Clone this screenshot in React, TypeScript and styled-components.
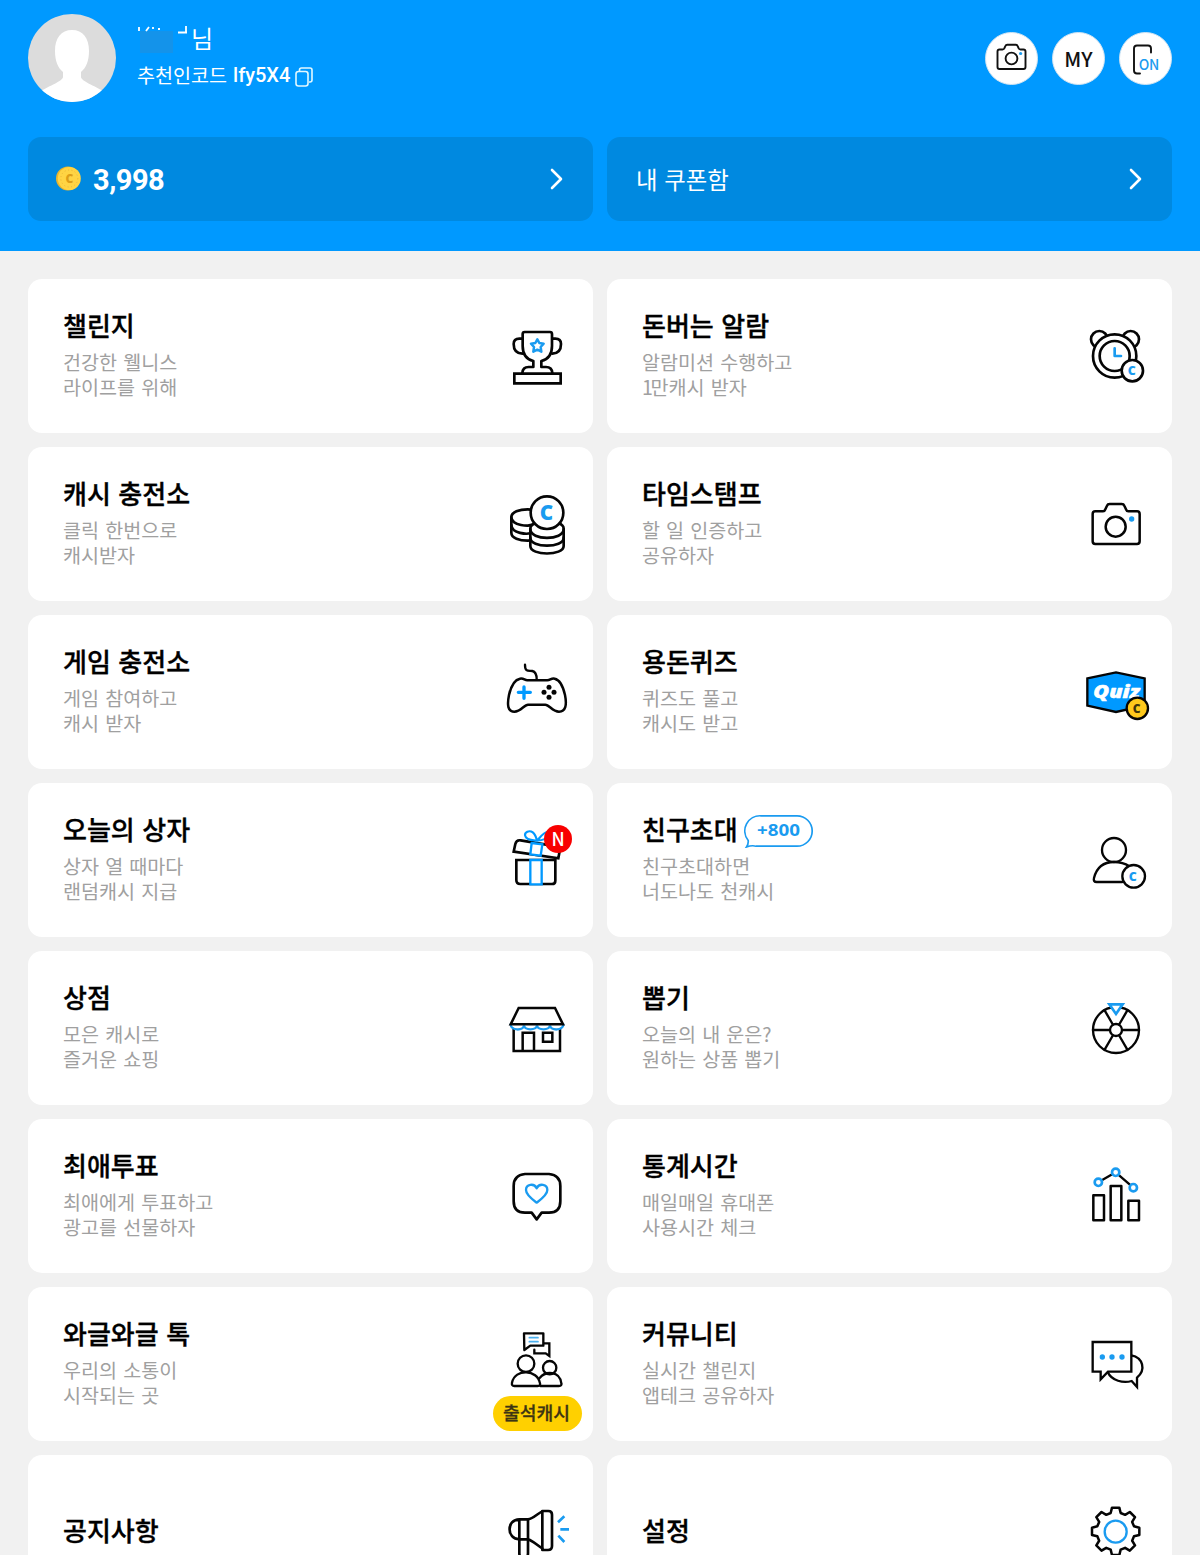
import React from "react";
import styled, { createGlobalStyle } from "styled-components";

const BLUE = "#1a9bf0";
const SKY = "#0099ff";
const INK = "#050505";

const Global = createGlobalStyle`
  * { box-sizing: border-box; }
  body {
    margin: 0;
    background: #f1f1f1;
    font-family: "Noto Sans CJK KR", "Noto Sans", sans-serif;
  }
`;

const Page = styled.div`
  width: 1200px;
  height: 1555px;
  overflow: hidden;
  background: #f1f1f1;
`;

const Header = styled.header`
  height: 251px;
  padding: 14px 28px 0;
  background: ${SKY};
  color: #fff;
`;

const Profile = styled.div`
  display: flex;
  height: 88px;
`;

const AvatarArt = styled.svg`
  width: 88px;
  height: 88px;
  flex: none;
`;

const Identity = styled.div`
  flex: 1;
  padding: 7px 0 0 21px;
`;

const NameRow = styled.div`
  display: flex;
  height: 34px;
  align-items: center;
  font-size: 24px;
  font-weight: 400;
  line-height: 34px;
`;

const Mask = styled.svg`
  width: 54px;
  height: 34px;
  flex: none;
  position: relative;
  top: 1px;
`;

const CodeRow = styled.div`
  display: flex;
  align-items: center;
  height: 28px;
  margin-top: 6px;
  font-size: 19.6px;
  font-weight: 400;
  line-height: 28px;
  white-space: pre;
  word-spacing: 1.5px;
`;

const Code = styled.span`
  font-family: Roboto, sans-serif;
  font-size: 20px;
  font-weight: 500;
`;

const CopyArt = styled.svg`
  width: 18px;
  height: 20px;
  margin: 4px 0 0 5px;
`;

const Actions = styled.div`
  display: flex;
  gap: 14px;
  align-items: center;
`;

const RoundButton = styled.button`
  display: flex;
  width: 53px;
  height: 53px;
  padding: 0;
  align-items: center;
  justify-content: center;
  border: 1px solid #cfe3f2;
  border-radius: 50%;
  background: #fff;
  color: #111;
  font: 500 20.5px/1 "Noto Sans CJK KR", sans-serif;
`;

const RoundArt = styled.svg`
  width: 51px;
  height: 51px;
`;

const Wallet = styled.div`
  display: grid;
  grid-template-columns: 1fr 1fr;
  gap: 14px;
  margin-top: 35px;
`;

const WalletItem = styled.div`
  display: flex;
  height: 84px;
  align-items: center;
  padding: 0 29px 0 28px;
  border-radius: 13px;
  background: #0089e0;
`;

const CoinArt = styled.svg`
  width: 25px;
  height: 25px;
  margin: 0 12px 2px 0;
`;

const Amount = styled.span`
  flex: 1;
  padding-top: 2px;
  font: 700 29px/34px Roboto, sans-serif;
  letter-spacing: -0.5px;
`;

const WalletLabel = styled.span`
  flex: 1;
  padding-left: 1px;
  font-size: 23.4px;
  font-weight: 400;
  line-height: 34px;
  padding-bottom: 1px;
  word-spacing: 1.5px;
`;

const ChevronArt = styled.svg`
  width: 14px;
  height: 24px;
`;

const Grid = styled.main`
  display: grid;
  grid-template-columns: 1fr 1fr;
  gap: 14px;
  padding: 28px 28px 0;
`;

const Card = styled.section`
  position: relative;
  display: flex;
  height: 154px;
  align-items: center;
  padding: 0 14px 0 35px;
  border-radius: 14px;
  background: #fff;
`;

const CardText = styled.div`
  flex: 1;
  padding-bottom: 5px;
`;

const TitleRow = styled.div`
  display: flex;
  height: 34px;
  align-items: center;
`;

const Title = styled.h2`
  margin: 0;
  color: #000;
  font-size: 26px;
  font-weight: 500;
  line-height: 34px;
  word-spacing: 1.6px;
  -webkit-text-stroke: 0.35px #000;
`;

const Caption = styled.p`
  margin: 7px 0 0;
  color: #a0a0a0;
  font-size: 19.6px;
  font-weight: 400;
  line-height: 25px;
  white-space: pre-line;
  word-spacing: 1.7px;
`;

const Tight = styled.span`
  letter-spacing: -2.4px;
`;

const IconSlot = styled.div`
  position: relative;
  width: 84px;
  height: 84px;
`;

const IconArt = styled.svg`
  display: block;
  width: 84px;
  height: 84px;
  overflow: visible;
`;

const NewBadge = styled.span`
  position: absolute;
  top: 7px;
  left: 49px;
  width: 28px;
  height: 28px;
  border-radius: 50%;
  background: #f80000;
  color: #fff;
  font: 500 18px/27px "Noto Sans CJK KR", sans-serif;
  text-align: center;
`;

const CashBadge = styled.span`
  position: absolute;
  right: 11px;
  bottom: 10px;
  width: 89px;
  height: 35px;
  padding-right: 2px;
  border-radius: 18px;
  background: #ffd000;
  color: #3d3413;
  font-size: 18.2px;
  font-weight: 500;
  line-height: 33px;
  text-align: center;
  -webkit-text-stroke: 0.3px #3d3413;
`;

const Bubble = styled.svg`
  width: 70px;
  height: 34px;
  margin: 4px 0 0 6px;
`;

type IconProps = { box: string; children: React.ReactNode };

const Icon = ({ box, children }: IconProps) => (
  <IconArt
    viewBox={box}
    fill="none"
    stroke={INK}
    strokeWidth={8}
    strokeLinecap="round"
    strokeLinejoin="round"
  >
    {children}
  </IconArt>
);

const Letter = ({
  x,
  y,
  size,
  fill = BLUE,
  children,
}: {
  x: number;
  y: number;
  size: number;
  fill?: string;
  children: string;
}) => (
  <text
    x={x}
    y={y}
    fontSize={size}
    fontWeight={800}
    fontFamily="Open Sans, sans-serif"
    textAnchor="middle"
    fill={fill}
    stroke="none"
  >
    {children}
  </text>
);

const Trophy = () => (
  <Icon box="15 12 252 252">
    <path d="M97 86H88Q71 86 71 102Q71 130 97 131M187 86h9q17 0 17 16q0 28-26 29" />
    <path d="M130 153C110 148 98 132 98 108V72q0-6 6-6h76q6 0 6 6v36c0 24-12 40-32 45v18h14q18 0 19 18M130 153v18h-14q-18 0-19 18" />
    <path d="M73 191H212V220H73Z" strokeLinejoin="miter" />
    <path
      d="M142 88l6 11 13 2-9 10 2 14-12-6-12 6 2-14-9-10 13-2Z"
      stroke={BLUE}
      strokeWidth={7.5}
    />
  </Icon>
);

const Coins = () => (
  <Icon box="15 516 252 252">
    <path d="M64 622c0-32 98-32 98 0v46c0 32-98 32-98 0Z" fill="#fff" />
    <path d="M64 622c2 27 55 27 62 22M64 645c2 27 48 28 58 24" />
    <path d="M121 656c0-30 100-30 100 0v52c0 30-100 30-100 0Z" fill="#fff" />
    <path d="M121 658c0 34 100 34 100 0M121 683c0 32 100 32 100 0" />
    <circle cx="171" cy="608" r="49" fill="#fff" />
    <Letter x={169} y={631} size={62}>C</Letter>
  </Icon>
);

const Alarm = () => (
  <Icon box="12 12 252 252">
    <circle cx="88" cy="88" r="25" />
    <circle cx="182" cy="88" r="25" />
    <circle cx="134" cy="138" r="65" fill="#fff" />
    <circle cx="134" cy="138" r="45" />
    <path d="M134 115v23h19" stroke={BLUE} />
    <circle cx="187" cy="182" r="32" fill="#fff" />
    <Letter x={185} y={195} size={37}>C</Letter>
  </Icon>
);

const Camera = () => (
  <Icon box="12 516 252 252">
    <path d="M76 604h23q5 0 7-6l5-11q2-5 8-5h36q6 0 8 5l5 11q2 6 7 6h26q8 0 8 8v82q0 8-8 8H76q-8 0-8-8v-82q0-8 8-8Z" strokeWidth={7.5} />
    <circle cx="137" cy="650" r="30" strokeWidth={7.5} />
    <circle cx="185" cy="627" r="8" fill={BLUE} stroke="none" />
  </Icon>
);

const Gamepad = () => (
  <Icon box="15 0 252 252">
    <path d="M105 44c0 24 12 17 22 19q13 3 13 25" strokeWidth={7} />
    <path d="M112 91h60c9 0 11-7 22-5c16 3 25 22 31 49c6 30 2 50-18 50c-20 0-29-21-41-21h-52c-12 0-21 21-41 21c-20 0-22-20-16-50c6-27 17-46 33-49c12-2 13 5 22 5Z" strokeWidth={7.5} />
    <path d="M102 111v34M85 127h36" stroke={SKY} strokeWidth={10} />
    <g fill={INK} stroke="none">
      <circle cx="177" cy="112" r="7.500" />
      <circle cx="177" cy="142" r="7.500" />
      <circle cx="162" cy="127" r="7.500" />
      <circle cx="192" cy="127" r="7.500" />
    </g>
  </Icon>
);

const Quiz = () => (
  <Icon box="12 0 252 252">
    <path d="M52 85L138 67l86 18v82l-86 19-86-19Z" fill={SKY} strokeLinejoin="miter" strokeWidth={7} />
    <text
      x="140"
      y="144"
      fontSize="52"
      fontWeight="800"
      fontStyle="italic"
      fontFamily="Open Sans, sans-serif"
      textAnchor="middle"
      textLength="140"
      lengthAdjust="spacingAndGlyphs"
      fill="#fff"
      stroke="#fff"
      strokeWidth="1.5"
    >
      Quiz
    </text>
    <circle cx="202" cy="175" r="32" fill="#ffc91c" strokeWidth={7} />
    <Letter x={200} y={188} size={36} fill="#40350b">C</Letter>
  </Icon>
);

const Gift = () => (
  <Icon box="15 504 252 252">
    <g strokeLinejoin="miter">
      <path d="M79 630H196V692q0 10-10 10H91q-12 0-12-12Z" />
      <path d="M71 605l5-23q3-13 16-11l108 18q11 3 9 14l-4 22Z" fill="#fff" />
      <path d="M121 630h34v73h-34ZM125 579l32 4-5 34-31-4Z" stroke={SKY} strokeWidth={7} fill="#fff" />
    </g>
    <path
      d="M141 572c-6-26-18-31-29-27c-11 5-8 17 2 22c8 4 18 4 27 5c8-8 22-28 31-26c15 4 9 22-31 26"
      stroke={SKY}
      strokeWidth={6.5}
    />
  </Icon>
);

const Friend = () => (
  <Icon box="12 504 252 252">
    <circle cx="132" cy="600" r="36" strokeWidth={7} />
    <path d="M157 696H80q-11 0-8-12C80 652 102 636 132 636q27 0 46 13" strokeWidth={7} />
    <circle cx="191" cy="679" r="34" fill="#fff" strokeWidth={7} />
    <Letter x={188} y={692} size={37}>C</Letter>
  </Icon>
);

const Store = () => (
  <Icon box="15 -12 252 252">
    <g strokeLinejoin="miter" strokeWidth={7.5}>
      <path d="M71 115V183H210V115M98 183V128H132V183M159 128H187V155H159Z" />
      <path
        d="M62 103c0 20 39 20 40 3c1 16 38 16 39 0c1 16 38 16 39 0c1 17 40 17 40-3"
        stroke={BLUE}
        strokeWidth={7}
        fill="#fff"
      />
      <path d="M86 54H195L219 103H62Z" />
    </g>
  </Icon>
);

const Wheel = () => (
  <Icon box="12 -12 252 252">
    <circle cx="138" cy="120" r="69" strokeWidth={7} />
    {[0, 60, 120, 180, 240, 300].map((angle) => (
      <path key={angle} d="M157 120H207" strokeWidth={7} transform={`rotate(${angle} 138 120)`} />
    ))}
    <circle cx="138" cy="120" r="18" strokeWidth={7} />
    <path d="M118 43H158L138 72Z" fill="#fff" stroke={BLUE} strokeLinejoin="miter" />
  </Icon>
);

const Vote = () => (
  <Icon box="15 492 252 252">
    <path d="M105 552h72q34 3 34 36v46q0 34-34 34h-22l-15 20-15-20h-20q-34 0-34-34v-46q0-33 34-36Z" />
    <path
      d="M140 638c-9-7-32-23-32-38c0-17 24-22 32-5c8-17 32-12 32 5c0 15-23 31-32 38Z"
      stroke={BLUE}
      strokeWidth={7}
    />
  </Icon>
);

const Stats = () => (
  <Icon box="12 492 252 252">
    <path d="M70 616H102V691H70ZM122 588H154V691H122ZM175 632H207V691H175Z" strokeWidth={7.5} />
    <path d="M85 577L137 547L190 593" strokeWidth={7} />
    <g fill="#fff" stroke={BLUE}>
      <circle cx="85" cy="577" r="11" />
      <circle cx="137" cy="547" r="11" />
      <circle cx="190" cy="593" r="11" />
    </g>
  </Icon>
);

const Talk = () => (
  <Icon box="45 36 252 252">
    <g strokeWidth={7}>
      <path d="M192 100h16v38l-11-8h-34v-11" strokeLinejoin="miter" />
      <path d="M132 70h58v37h-39l-18 13Z" fill="#fff" />
      <path d="M148 83h26M148 95h26" stroke="#4bb0ef" strokeWidth={5} />
      <circle cx="209" cy="173" r="20" />
      <path d="M181 228h56q9 0 7-8c-5-38-47-38-65-16" />
      <circle cx="138" cy="161" r="25" />
      <path d="M103 228h70q9 0 7-8c-7-42-75-46-84-2q-2 10 7 10Z" fill="#fff" />
    </g>
  </Icon>
);

const Community = () => (
  <Icon box="12 36 252 252">
    <path d="M184 136c35 7 45 43 17 67v28l-16-18c-25 7-60 0-72-27" strokeWidth={7} strokeLinejoin="miter" />
    <path d="M68 96H184V185H114L92 208V185H68Z" strokeLinejoin="miter" strokeWidth={7} fill="#fff" />
    <g fill={BLUE} stroke="none">
      <circle cx="97" cy="141" r="8" />
      <circle cx="126" cy="141" r="8" />
      <circle cx="156" cy="141" r="8" />
    </g>
  </Icon>
);

const Megaphone = () => (
  <Icon box="45 540 252 252">
    <path d="M118 628c-39 0-39 60 0 60M118 628h26v60h-26ZM144 628c14-1 28-17 43-24M144 688c14 3 28 19 43 27" />
    <path d="M187 603h18q11 0 11 11v94q0 12-12 12h-17ZM118 688v42q0 14 13 14t13-14v-42" />
    <path d="M234 637l19-18M241 658h26M235 677l18 19" stroke={BLUE} strokeLinecap="butt" />
  </Icon>
);

const gearOutline = () => {
  const points: string[] = [];
  for (let tooth = 0; tooth < 8; tooth += 1) {
    const turn = (tooth * Math.PI) / 4;
    [
      [-15, 55],
      [-11, 71],
      [11, 71],
      [15, 55],
    ].forEach(([side, out]) => {
      const x = 137 + out * Math.sin(turn) + side * Math.cos(turn);
      const y = 664 - out * Math.cos(turn) + side * Math.sin(turn);
      points.push(`${x.toFixed(1)} ${y.toFixed(1)}`);
    });
  }
  return `M${points.join("L")}Z`;
};

const Gear = () => (
  <Icon box="12 540 252 252">
    <path d={gearOutline()} strokeWidth={7.5} />
    <circle cx="137" cy="665" r="33" stroke={BLUE} strokeWidth={7} />
  </Icon>
);

const Chevron = () => (
  <ChevronArt viewBox="0 0 14 24" fill="none" stroke="#fff" strokeWidth="2.6" strokeLinecap="round" strokeLinejoin="round">
    <path d="M2 3L11 12L2 21" />
  </ChevronArt>
);

const Reward = () => (
  <Bubble viewBox="0 0 70 34" fill="none">
    <path
      d="M17 1.8H53A15.2 15.2 0 0 1 53 32.2H12Q8 31 2.5 33Q4.6 30 4.2 26.5A15.2 15.2 0 0 1 17 1.8Z"
      stroke={BLUE}
      strokeWidth="1.7"
    />
    <text x="34.5" y="22.3" textAnchor="middle" fill={BLUE} fontFamily="Open Sans, sans-serif" fontWeight="700" fontSize="16.5" textLength="43" lengthAdjust="spacingAndGlyphs">
      +800
    </text>
  </Bubble>
);

type Item = {
  title: string;
  caption?: React.ReactNode;
  icon: React.ReactNode;
  reward?: boolean;
  fresh?: boolean;
  cash?: string;
};

const items: Item[] = [
  { title: "챌린지", caption: "건강한 웰니스\n라이프를 위해", icon: <Trophy /> },
  {
    title: "돈버는 알람",
    caption: (
      <>
        {"알람미션 수행하고\n"}
        <Tight>1</Tight>만캐시 받자
      </>
    ),
    icon: <Alarm />,
  },
  { title: "캐시 충전소", caption: "클릭 한번으로\n캐시받자", icon: <Coins /> },
  { title: "타임스탬프", caption: "할 일 인증하고\n공유하자", icon: <Camera /> },
  { title: "게임 충전소", caption: "게임 참여하고\n캐시 받자", icon: <Gamepad /> },
  { title: "용돈퀴즈", caption: "퀴즈도 풀고\n캐시도 받고", icon: <Quiz /> },
  { title: "오늘의 상자", caption: "상자 열 때마다\n랜덤캐시 지급", icon: <Gift />, fresh: true },
  { title: "친구초대", caption: "친구초대하면\n너도나도 천캐시", icon: <Friend />, reward: true },
  { title: "상점", caption: "모은 캐시로\n즐거운 쇼핑", icon: <Store /> },
  { title: "뽑기", caption: "오늘의 내 운은?\n원하는 상품 뽑기", icon: <Wheel /> },
  { title: "최애투표", caption: "최애에게 투표하고\n광고를 선물하자", icon: <Vote /> },
  { title: "통계시간", caption: "매일매일 휴대폰\n사용시간 체크", icon: <Stats /> },
  { title: "와글와글 톡", caption: "우리의 소통이\n시작되는 곳", icon: <Talk />, cash: "출석캐시" },
  { title: "커뮤니티", caption: "실시간 챌린지\n앱테크 공유하자", icon: <Community /> },
  { title: "공지사항", icon: <Megaphone /> },
  { title: "설정", icon: <Gear /> },
];

export default function App() {
  return (
    <Page>
      <Global />
      <Header>
        <Profile>
          <AvatarArt viewBox="0 0 88 88">
            <defs>
              <clipPath id="avatar"><circle cx="44" cy="44" r="44" /></clipPath>
            </defs>
            <g clipPath="url(#avatar)">
              <path d="M0 0H88V88H0Z" fill="#dcdcdc" />
              <path d="M44 16c11 0 17 8 17 21c0 10-3 17-8 21v5c0 4 14 9 22 14l10 11H3l10-11c8-5 22-10 22-14v-5c-5-4-8-11-8-21c0-13 6-21 17-21Z" fill="#fff" />
            </g>
          </AvatarArt>
          <Identity>
            <NameRow>
              <Mask viewBox="0 0 54 34">
                <path d="M3 9H36V31H3Z" fill="#1493ea" />
                <path d="M2 5v4M12 5L9 9M16 5v2M21 7h2M49 4v6M41 10.500h9" stroke="#fff" strokeWidth="1.8" fill="none" />
              </Mask>
              님
            </NameRow>
            <CodeRow>
              추천인코드 <Code>lfy5X4</Code>
              <CopyArt viewBox="0 0 18 20" fill="none" stroke="#e2f8ff" strokeWidth="1.6">
                <path d="M4.500 4V3q0-2 2-2h8.500q2 0 2 2v10q0 2-2 2H14" />
                <rect x="1" y="4.500" width="12" height="14.500" rx="2.500" />
              </CopyArt>
            </CodeRow>
          </Identity>
          <Actions>
            <RoundButton aria-label="camera">
              <RoundArt viewBox="0 0 51 51" fill="none" stroke="#111" strokeWidth="1.9" strokeLinejoin="round">
                <path d="M13.500 16.500h3q1.500 0 2-1.500l.8-1.800q.6-1.500 2-1.500h8.400q1.400 0 2 1.500l.8 1.800q.5 1.500 2 1.500h3q2 0 2 2v15.500q0 2-2 2h-24q-2 0-2-2V18.500q0-2 2-2Z" />
                <circle cx="25.500" cy="25.500" r="5.900" />
                <circle cx="34.600" cy="20.500" r="1.600" fill={BLUE} stroke="none" />
              </RoundArt>
            </RoundButton>
            <RoundButton>MY</RoundButton>
            <RoundButton>
              <RoundArt viewBox="0 0 51 51" fill="none" stroke="#111" strokeWidth="1.9" strokeLinecap="round">
                <path d="M31 19.500v-4q0-3-3-3h-11q-3 0-3 3v22q0 3 3 3h3" />
                <text x="29" y="37" fontFamily="Noto Sans CJK KR, sans-serif" fontWeight="500" fontSize="14" textAnchor="middle" textLength="20.500" fill={BLUE} stroke="none">
                  ON
                </text>
              </RoundArt>
            </RoundButton>
          </Actions>
        </Profile>
        <Wallet>
          <WalletItem>
            <CoinArt viewBox="0 0 25 25">
              <circle cx="12" cy="12.500" r="12" fill="#e9b52c" />
              <circle cx="13.300" cy="12.500" r="11.500" fill="#ffd443" />
              <circle cx="13.300" cy="12.500" r="8.500" fill="none" stroke="#e9b73a" strokeWidth="1" strokeDasharray="1 2.500" />
              <text x="13.500" y="17" fontFamily="Open Sans, sans-serif" fontWeight="800" fontSize="12" textAnchor="middle" fill="#dd9f18">C</text>
            </CoinArt>
            <Amount>3,998</Amount>
            <Chevron />
          </WalletItem>
          <WalletItem>
            <WalletLabel>내 쿠폰함</WalletLabel>
            <Chevron />
          </WalletItem>
        </Wallet>
      </Header>
      <Grid>
        {items.map((item) => (
          <Card key={item.title}>
            <CardText>
              <TitleRow>
                <Title>{item.title}</Title>
                {item.reward && <Reward />}
              </TitleRow>
              {item.caption && <Caption>{item.caption}</Caption>}
            </CardText>
            <IconSlot>
              {item.icon}
              {item.fresh && <NewBadge>N</NewBadge>}
            </IconSlot>
            {item.cash && <CashBadge>{item.cash}</CashBadge>}
          </Card>
        ))}
      </Grid>
    </Page>
  );
}
